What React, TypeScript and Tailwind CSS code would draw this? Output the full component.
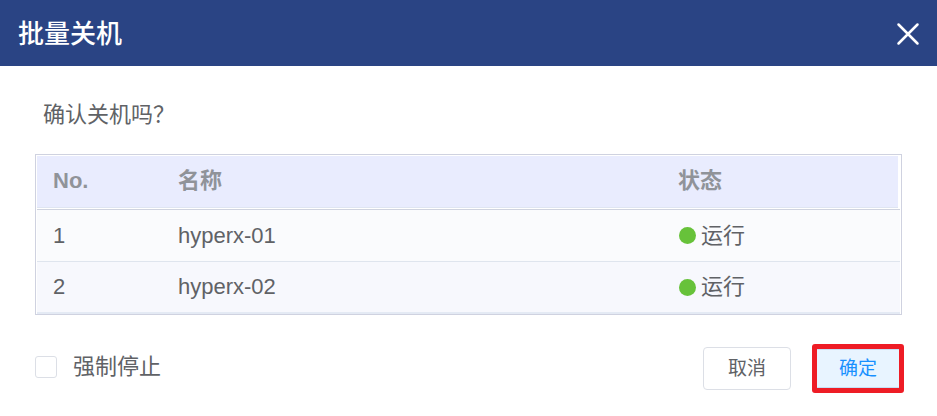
import React from 'react';

const rows = [
  { no: 1, name: 'hyperx-01', status: '运行' },
  { no: 2, name: 'hyperx-02', status: '运行' },
];

const headings = [
  { label: 'No.', width: 'w-[125px]' },
  { label: '名称', width: 'w-[500px]' },
  { label: '状态', width: '' },
];

export default function App() {
  return (
    <div
      role="dialog"
      aria-labelledby="dialog-title"
      className="w-full bg-white font-['Liberation_Sans','Noto_Sans_CJK_SC',sans-serif] text-[22px] leading-8 text-[#606266]"
    >
      <header className="flex h-[66px] items-center justify-between bg-[#2a4484] pt-0.5 pr-[17px] pl-[18px] text-white">
        <h1 id="dialog-title" className="text-[26px] leading-8 font-medium">批量关机</h1>
        <button type="button" aria-label="关闭">
          <svg width="24" height="24" viewBox="0 0 24 24" fill="none" stroke="currentColor" strokeWidth="2.5" strokeLinecap="round">
            <path d="M2.5 2.5l19 19M21.5 2.5l-19 19" />
          </svg>
        </button>
      </header>

      <main className="px-[35px]">
        <p className="px-2 pt-[33px] pb-[23px]">确认关机吗？</p>

        <div className="border border-[#cfd2e0] px-px pt-px">
          <table className="w-full table-fixed border-separate border-spacing-0 text-left">
            <thead>
              <tr>
                {headings.map((h) => (
                  <th key={h.label} className={`border-b border-[#cfd3e0] p-0 pb-px font-bold text-[#909399] last:pr-0.5 ${h.width}`}>
                    <div className="h-[52px] border-b border-[#dfe5f2] bg-[#e9ecfe] px-4 pt-[9px]">{h.label}</div>
                  </th>
                ))}
              </tr>
            </thead>
            <tbody>
              {rows.map((r) => (
                <tr key={r.no} className="h-[52px] odd:bg-[#fafbfd] even:bg-[#f7f8fd] [&>td]:border-b [&>td]:border-[#dfe5ee] [&>td]:px-4 last:[&>td]:border-b-2 last:[&>td]:border-[#e4eaf4]">
                  <td>{r.no}</td>
                  <td>{r.name}</td>
                  <td>
                    <span className="flex items-center gap-[5px]">
                      <span className="ml-px size-[17px] rounded-full bg-[#67c23a]" />
                      {r.status}
                    </span>
                  </td>
                </tr>
              ))}
            </tbody>
          </table>
        </div>
      </main>

      <footer className="flex items-center justify-between pt-[29px] pr-[33px] pb-6 pl-[35px]">
        <label className="flex items-center gap-4 pb-1">
          <input type="checkbox" className="size-[22px] appearance-none rounded-[3px] border border-[#dcdfe6] bg-white checked:bg-[#1890ff]" />
          强制停止
        </label>
        <div className="flex items-center gap-[21px] text-[19px]">
          <button type="button" className="h-[43px] w-[88px] rounded-[4px] border border-[#dcdfe6] bg-white">取消</button>
          <span className="flex rounded-[3px] border-5 border-[#ee1c25]">
            <button type="button" className="h-[39px] w-[82px] border-y border-[#c6dff5] bg-[#e8f4ff] text-[#1890ff]">确定</button>
          </span>
        </div>
      </footer>
    </div>
  );
}
